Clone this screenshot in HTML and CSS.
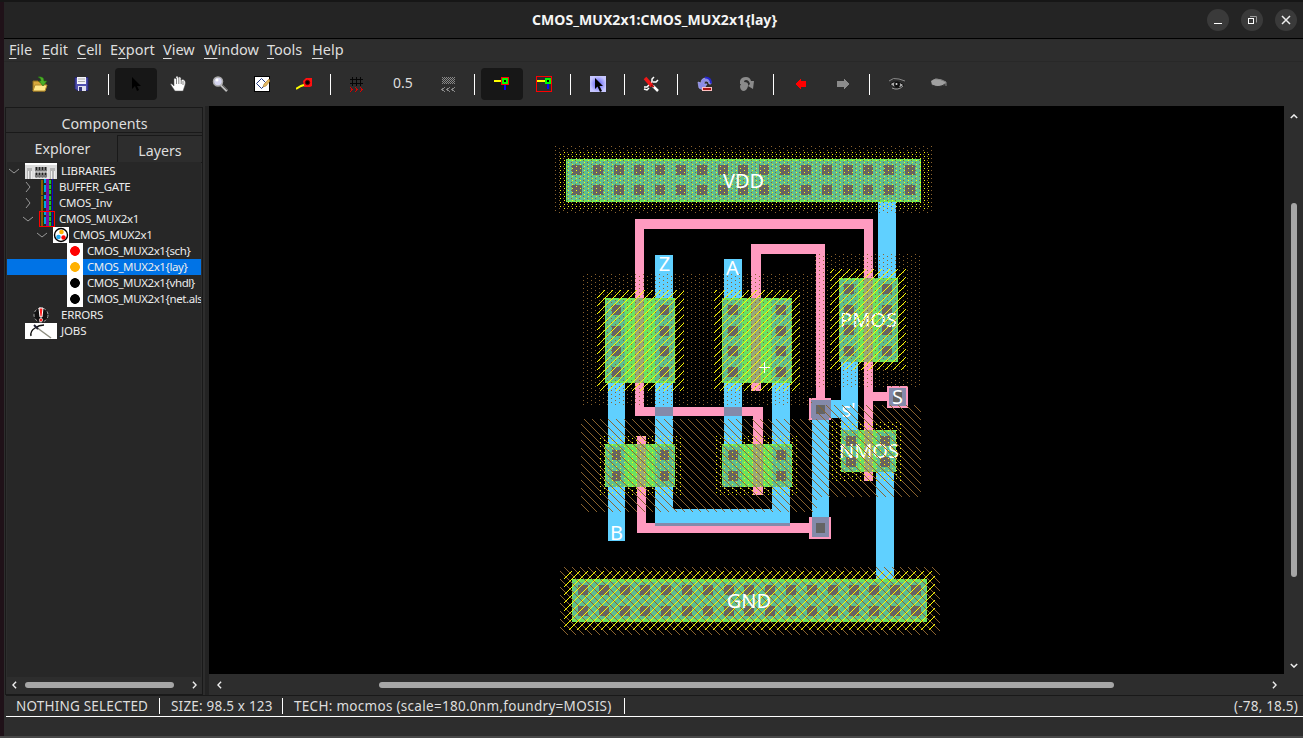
FILE: index.html
```html
<!DOCTYPE html>
<html lang="en">
<head>
<meta charset="utf-8">
<title>CMOS_MUX2x1:CMOS_MUX2x1{lay}</title>
<link rel="stylesheet" href="styles.css">
</head>
<body>
<div class="window">
  <header class="titlebar">
    <h1 class="title">CMOS_MUX2x1:CMOS_MUX2x1{lay}</h1>
    <div class="controls">
      <span class="control"><svg width="22" height="22"><path d="M7 14.5h8" stroke="#fff"/></svg></span>
      <span class="control"><svg width="22" height="22" fill="none"><path d="M9 7.500h6.500v6" stroke="#999"/><rect x="7.500" y="9.500" width="5" height="5" stroke="#fff"/></svg></span>
      <span class="control"><svg width="22" height="22"><path d="M7 7l8 8M15 7l-8 8" stroke="#eee" stroke-width="1.500"/></svg></span>
    </div>
  </header>
  <nav class="menubar">
    <span class="m-file"><u>F</u>ile</span><span class="m-edit"><u>E</u>dit</span><span class="m-cell"><u>C</u>ell</span><span class="m-export">E<u>x</u>port</span><span class="m-view"><u>V</u>iew</span><span class="m-window"><u>W</u>indow</span><span class="m-tools"><u>T</u>ools</span><span class="m-help"><u>H</u>elp</span>
  </nav>
  <div class="toolbar">
    <span class="tool"><svg width="16" height="16"><path d="M1 5h5l1 1h6v9H1z" fill="#d8a93c" stroke="#8a6a1c"/><path d="M3 9h12l-2 6H1z" fill="#ffe98c" stroke="#b58b2a"/><path d="M6 1q6-1 6 4h3l-4 5-4-5h2q0-3-3-4z" fill="#4caf28" stroke="#236b12" stroke-width=".6"/></svg></span>
    <span class="tool"><svg width="16" height="16"><path d="M1 1.500h13v13H3l-2-2z" fill="#5050b0" stroke="#25256e"/><rect x="3" y="1" width="9" height="7" fill="#f4f4fa"/><path d="M4 3h7M4 5.500h7" stroke="#aaa"/><rect x="4" y="10" width="8" height="5" fill="#dfdff0"/><rect x="5" y="11" width="3" height="4" fill="#333377"/></svg></span>
    <i class="sep"></i>
    <span class="tool active"><svg width="16" height="16"><path d="M4 1v12l3-3 2 5 2-1-2-4h4z" fill="#000"/></svg></span>
    <span class="tool"><svg width="16" height="16"><path d="M5 15L1 9Q0 7 2 8l2 2V3q1-2 2 0V1q1-2 2 0v1q1-2 3 0v2q2-1 3 0 2 1 1 5l-2 6z" fill="#fff" stroke="#555" stroke-width=".5"/><path d="M6.500 2v6M8.800 2v6M11.200 3v5M13 5v4" stroke="#333" stroke-width=".6"/></svg></span>
    <span class="tool"><svg width="16" height="16"><circle cx="6" cy="5.500" r="4.500" fill="#d5d5ef" stroke="#aaa" stroke-width="1.500"/><circle cx="5" cy="4" r="1.500" fill="#fff"/><path d="M9 9l6 6" stroke="#bbb" stroke-width="2.500"/><path d="M10 9l5 5" stroke="#444" stroke-width=".7"/></svg></span>
    <span class="tool"><svg width="16" height="16"><rect x=".5" y=".5" width="15" height="15" fill="#fff" stroke="#000"/><path d="M7.500 2.500l5 5-5 5-5-5z" fill="none" stroke="#223a80"/><path d="M9 11l1-3 5-5 1 2-4 5z" fill="#e4b95f" stroke="#a87830" stroke-width=".6"/></svg></span>
    <span class="tool"><svg width="16" height="16"><path d="M7 5l3-3h6v8l-2 1H8z" fill="#ff1010"/><circle cx="11.500" cy="6.500" r="2.200" fill="#000" stroke="#600"/><path d="M0 13l5-3 3-1" stroke="#ffff00" stroke-width="2" fill="none"/></svg></span>
    <i class="sep"></i>
    <span class="tool"><svg width="16" height="16" class="px"><path d="M1 3.500h13M1 7.500h13M3.500 1v9M7.500 1v9M11.500 1v9" stroke="#050505"/><path d="M1 11l2 2.500L1 16M6 11l2 2.500L6 16M11 11l2 2.500-2 2.500" stroke="#d00" fill="none"/></svg></span>
    <span class="tool wide">0.5</span>
    <span class="tool"><svg width="16" height="16" class="px"><path d="M2 1.500h13M2 3.500h13M2 5.500h13M2 7.500h13" stroke="#888" stroke-dasharray="1 1"/><path d="M3 2.500h12M3 4.500h12M3 6.500h12" stroke="#888" stroke-dasharray="1 1"/><path d="M5 11l-3 2.500L5 16M10 11l-3 2.500 3 2.500M15 11l-3 2.500 3 2.500" stroke="#888" fill="none"/></svg></span>
    <i class="sep"></i>
    <span class="tool active"><svg width="16" height="16" class="px"><rect y="4" width="7" height="2" fill="#ff0"/><rect x="10" y="8" width="2" height="6" fill="#00f"/><rect x="7" y="1" width="8" height="8" fill="red"/><rect x="8" y="2" width="6" height="6" fill="#0f0"/><rect x="10" y="4" width="2" height="2" fill="#000"/></svg></span>
    <span class="tool"><svg width="16" height="16" class="px"><rect x=".5" y=".5" width="15" height="15" fill="none" stroke="red"/><rect x="1" y="4" width="8" height="2" fill="#ff0"/><rect x="11" y="8" width="2" height="5" fill="#00f"/><rect x="9" y="2" width="6" height="6" fill="#0f0"/><rect x="11" y="4" width="2" height="2" fill="#000"/></svg></span>
    <i class="sep"></i>
    <span class="tool"><svg width="16" height="16"><defs><radialGradient id="halo"><stop stop-color="#5757f5"/><stop offset="1" stop-color="#c6c6ff"/></radialGradient></defs><rect width="16" height="16" fill="url(#halo)"/><path d="M5 2v11l2.500-2.500L10 16l2-1-2.500-5H13z" fill="#000"/></svg></span>
    <i class="sep"></i>
    <span class="tool"><svg width="16" height="16"><path d="M11 1L9 3v3L4 11l-3 0M15 4l-2 2h-3M1 13l3 1 2-2" stroke="#fff" stroke-width="1.500" fill="none"/><path d="M10 10l5 5" stroke="#fff" stroke-width="2.500"/><path d="M2 2l7 8" stroke="#f01818" stroke-width="3.500"/><path d="M8 9l3 2" stroke="#b00" stroke-width="1.500"/></svg></span>
    <i class="sep"></i>
    <span class="tool"><svg width="16" height="16"><path d="M1 6l3 1q0-5 5-5 5 0 5 6l-2 0q0-3-3-3-2 0-2 3l3 0-4 6-4-2z" fill="#8c8ce6" stroke="#aaaaf5" stroke-width=".7"/><path d="M8 1.500q6 0 6 6" stroke="#2525cc" stroke-width="2" fill="none"/><rect x="5.500" y="11.500" width="9" height="3" fill="#a51515" stroke="#ffc0c0"/></svg></span>
    <span class="tool"><svg width="16" height="16"><path d="M1 5q1-4 6-4 4 0 5 4l3 0-1 8-5-3 2-2q-1-4-4-4-2 0-2 2 5 0 4 4-1 5-5 5-3-1-3-5l1-2-1 0z" fill="#8b8b8b"/></svg></span>
    <i class="sep"></i>
    <span class="tool"><svg width="16" height="16" class="px"><path d="M3 8l5-6v3h5v6H8v3z" fill="#f00"/></svg></span>
    <span class="tool"><svg width="16" height="16" class="px"><path d="M14 8L9 2v3H2v6h7v3z" fill="#8b8b8b"/></svg></span>
    <i class="sep"></i>
    <span class="tool"><svg width="16" height="16"><path d="M0 5q4-4 10-2l6 2" stroke="#888" fill="none"/><path d="M1 8q6-5 14 1-7 6-14-1" fill="#aaa" stroke="#111"/><circle cx="8" cy="8.500" r="3" fill="#111"/><circle cx="7.500" cy="8" r="1" fill="#ddd"/><path d="M3 12q6 3 11-2" stroke="#999" fill="none"/></svg></span>
    <span class="tool"><svg width="16" height="16"><path d="M0 5q5-4 10-1l5 2-1 3q-8 2-13 0z" fill="#a0a0a0"/><path d="M1 9q7 4 13-1M2 10l-1 2M5 11v2M9 11v2" stroke="#333" fill="none"/><path d="M4 3q7 0 11 3l0 4" stroke="#888" fill="none"/></svg></span>
  </div>
  <main class="content">
    <aside class="side">
      <div class="tab-components">Components</div>
      <div class="tabs"><span class="tab-explorer">Explorer</span><span class="tab-layers">Layers</span></div>
      <div class="tree">
        <div class="row l0"><svg class="exp" viewBox="0 0 10 10"><path d="M0 3l5 4 5-4"/></svg><svg class="i32" viewBox="0 0 32 16"><rect width="32" height="16" fill="#ddd"/><path d="M0 0h32v2H0z" fill="#fff"/><path d="M10 4h12v11H10z" fill="#777"/><path d="M2 5h5v11H2zM25 5h5v11h-5z" fill="#b5b5b5"/><path d="M3.500 8v8M6.500 8v8M26.500 8v8M29.500 8v8" stroke="#eee"/><path d="M11.500 4v11M14.500 4v11M17.500 4v11M20.500 4v11" stroke="#222" stroke-dasharray="3 2"/><path d="M9 9h14M8 15h16" stroke="#f5f5f5"/></svg><span>LIBRARIES</span></div>
        <div class="row l1"><svg class="exp" viewBox="0 0 10 10"><path d="M3 0l4 5-4 5"/></svg><svg class="i16 px"><use href="#books"/></svg><span>BUFFER_GATE</span></div>
        <div class="row l1"><svg class="exp" viewBox="0 0 10 10"><path d="M3 0l4 5-4 5"/></svg><svg class="i16 px"><use href="#books"/></svg><span>CMOS_Inv</span></div>
        <div class="row l1"><svg class="exp" viewBox="0 0 10 10"><path d="M0 3l5 4 5-4"/></svg><svg class="i16 px"><use href="#books"/><rect x=".5" y=".5" width="15" height="15" fill="none" stroke="red"/></svg><span>CMOS_MUX2x1</span></div>
        <div class="row l2"><svg class="exp" viewBox="0 0 10 10"><path d="M0 3l5 4 5-4"/></svg><svg class="i16"><rect width="16" height="16" fill="#fff"/><circle cx="8" cy="8" r="6.500" fill="#fff" stroke="#000" stroke-width="1.400"/><circle cx="8.500" cy="5" r="2.300" fill="#ffb000"/><circle cx="5.500" cy="10" r="2.300" fill="#20aaf0"/><circle cx="10.500" cy="10.500" r="2.200" fill="red"/></svg><span>CMOS_MUX2x1</span></div>
        <div class="row l3"><i class="dot red"></i><span>CMOS_MUX2x1{sch}</span></div>
        <div class="row l3 selected"><i class="dot amber"></i><span>CMOS_MUX2x1{lay}</span></div>
        <div class="row l3"><i class="dot"></i><span>CMOS_MUX2x1{vhdl}</span></div>
        <div class="row l3"><i class="dot"></i><span>CMOS_MUX2x1{net.als}</span></div>
        <div class="row le"><svg class="i16"><circle cx="8" cy="8" r="7" fill="#111" stroke="#aaa" stroke-dasharray="3 2"/><path d="M6 1h4l-1 9H7z" fill="#ff2020" stroke="#fff"/><circle cx="8" cy="13" r="1.700" fill="#ff2020" stroke="#fff" stroke-width=".6"/></svg><span>ERRORS</span></div>
        <div class="row lj"><svg class="i32" viewBox="0 0 32 16"><rect width="32" height="16" fill="#fff"/><path d="M11 4l15 11" stroke="#8d8d80" stroke-width="1.500"/><path d="M6 13q-1-5 4-8 4-3 9-3" stroke="#111" fill="none" stroke-width="1.400"/><path d="M9 2l4 4" stroke="#223" stroke-width="2"/></svg><span>JOBS</span></div>
      </div>
      <div class="hscroll side-scroll"><svg class="arrow" viewBox="0 0 6 10"><path d="M5 1L1 5l4 4"/></svg><i class="thumb"></i><svg class="arrow" viewBox="0 0 6 10"><path d="M1 1l4 4-4 4"/></svg></div>
    </aside>
    <section class="editor">
      <svg class="canvas px" width="1075" height="568" viewBox="209 106 1075 568">
        <defs>
          <g id="books" fill="none"><path d="M3 1v15" stroke="#8a5a00" stroke-width="2"/><path d="M4.500 2v14" stroke="#074707" stroke-dasharray="2 1"/><path d="M6 0v16" stroke="#00a8e0" stroke-width="2" stroke-dasharray="4 2 7"/><path d="M8.500 0v16" stroke="#7810a5" stroke-width="3"/><path d="M11 1v15" stroke="#12c828" stroke-width="2" stroke-dasharray="4 1"/><path d="M13.500 0v16" stroke="#0909c8"/></g>
          <pattern id="nwell" width="8" height="4" patternUnits="userSpaceOnUse"><path d="M3 2h1v1H3zM7 0h1v1H7z" fill="#8b632e"/></pattern>
          <pattern id="nsel" width="8" height="4" patternUnits="userSpaceOnUse"><path d="M0 2h1v1H0zM4 0h1v1H4z" fill="#ff0"/></pattern>
          <pattern id="psel" width="8" height="8" patternUnits="userSpaceOnUse"><path d="M6 0h1v1H6zM5 1h1v1H5zM4 2h1v1H4zM3 3h1v1H3zM2 4h1v1H2zM1 5h1v1H1zM0 6h1v1H0zM7 7h1v1H7z" fill="#ff0"/></pattern>
          <pattern id="pwell" width="8" height="8" patternUnits="userSpaceOnUse"><path d="M5 0h1v1H5zM6 1h1v1H6zM7 2h1v1H7zM0 3h1v1H0zM1 4h1v1H1zM2 5h1v1H2zM3 6h1v1H3zM4 7h1v1H4z" fill="#8b632e"/></pattern>
        </defs>
        <rect x="209" y="106" width="1075" height="568"/>
        <!-- metal-1 wires -->
        <g fill="#60d0ff">
          <path d="M655 255h18v257h-18zM608 380h17v161h-17zM724 259h18v190h-18zM772 380h18v146h-18zM655 509h135v17H655zM878 202h18v80h-18zM841 360h17v72h-17zM829 400h29v18h-29zM812 418h17v101h-17zM876 470h18v112h-18z"/>
        </g>
        <!-- polysilicon -->
        <g fill="#ff9bc0">
          <path d="M635 219h238v10H635zM635 229h9v187h-9zM644 407h119v9H644zM753 416h10v79h-10zM751 244h74v10h-74zM751 254h10v137h-10zM816 254h9v145h-9zM864 229h9v252h-9zM873 392h14v9h-14zM637 436h9v97h-9zM646 523h163v10H646zM887 386h21v22h-21zM809 398h22v22h-22zM809 517h22v22h-22z"/>
        </g>
        <!-- poly over metal -->
        <path fill="#848aaa" d="M655 407h18v9h-18zM724 407h18v9h-18zM655 523h135v3H655zM889 388h17v18h-17zM811 400h20v18h-20zM812 418h17v2h-17zM812 517h17v20h-17z"/>
        <!-- diffusion -->
        <path fill="#6be260" d="M566 159h355v43H566zM572 579h355v43H572zM605 298h70v85h-70zM722 298h70v85h-70zM605 444h70v43h-70zM722 444h70v43h-70zM839 278h59v84h-59zM841 430h55v42h-55z"/>
        <!-- metal over diffusion -->
        <path fill="#5ebd90" d="M567 161h353v39H567zM573 582h353v37H573zM606 300h19v81h-19zM655 300h19v81h-19zM723 300h19v81h-19zM772 300h19v81h-19zM606 446h19v41h-19zM655 446h19v41h-19zM723 446h19v41h-19zM772 446h19v41h-19zM840 280h18v82h-18zM878 280h19v80h-19zM842 430h16v41h-16zM876 432h19v40h-19z"/>
        <!-- gates -->
        <path fill="#98a878" d="M635 298h9v85h-9zM751 298h10v85h-10zM637 444h9v43h-9zM753 444h10v43h-10zM864 278h9v84h-9zM864 430h9v42h-9z"/>
        <!-- contact cuts -->
        <g stroke="#646464" stroke-width="10" fill="none">
          <path d="M572 170h343M572 190.400h343M578 590.400h343M578 611h343" stroke-dasharray="10 10.810"/>
          <path d="M733 305v72M781 305v72M849.400 284v72M887 284v72M733 450v31M781 450v31M851.400 436v31M885 436v31" stroke-dasharray="10 10.700"/>
          <path d="M616.500 305v72M664.500 305v72M616.500 450v31M664.500 450v31" stroke-width="9" stroke-dasharray="10 10.700"/>
        </g>
        <path fill="#646464" d="M893 392h9v10h-9zM816 405h9v9h-9zM816 523h9v10h-9z"/>
        <g class="labels">
          <text x="868.500" y="327">PMOS</text><text x="869" y="458">NMOS</text><text x="848.500" y="417">s'</text>
        </g>
        <!-- wells and selects -->
        <path fill="url(#nwell)" d="M555 146h377v67H555zM583 274h232v132H583zM815 254h106v133H815z"/>
        <path fill="url(#pwell)" d="M560 567h380v68H560zM581 419h236v93H581zM817 405h104v92H817z"/>
        <path fill="url(#nsel)" d="M559 152h370v57H559zM600 436h81v59h-81zM716 436h81v59h-81zM832 422h69v59h-69z"/>
        <path fill="url(#psel)" d="M564 571h371v59H564zM597 290h87v101h-87zM714 290h86v101h-86zM830 269h76v101h-76z"/>
        <path d="M759 367.500h11M764.500 362v11" stroke="#fff"/>
        <g class="labels">
          <text x="743.500" y="188">VDD</text><text x="749" y="608">GND</text><text x="664.500" y="271">Z</text><text x="732.500" y="275">A</text><text x="616.500" y="540">B</text><text x="897.500" y="404">S</text>
        </g>
      </svg>
      <div class="vscroll"><svg class="varrow" viewBox="0 0 10 6"><path d="M1 5l4-4 4 4"/></svg><i class="vthumb"></i><svg class="varrow" viewBox="0 0 10 6"><path d="M1 1l4 4 4-4"/></svg></div>
      <div class="hscroll main-scroll"><svg class="arrow" viewBox="0 0 6 10"><path d="M5 1L1 5l4 4"/></svg><i class="thumb"></i><svg class="arrow" viewBox="0 0 6 10"><path d="M1 1l4 4-4 4"/></svg></div>
    </section>
  </main>
  <footer class="status"><span class="s1">NOTHING SELECTED</span><span class="s2">SIZE: 98.5 x 123</span><span class="s3">TECH: mocmos (scale=180.0nm,foundry=MOSIS)</span><span class="s4">(-78, 18.5)</span></footer>
</div>
</body>
</html>
```
FILE: styles.css
```css
* { box-sizing: border-box; }
body { margin: 0; background: #1f1118; font-family: "Noto Sans", "Open Sans", sans-serif; color: #dedede; overflow: hidden; }
svg { display: block; flex: none; }
.px { shape-rendering: crispEdges; }
.window { width: 1303px; height: 738px; padding-left: 4px; border-top: 2px solid #161616; border-bottom: 2px solid #484848; background: #2d2d2d; box-shadow: inset 4px 0 #1f1118; display: flex; flex-direction: column; white-space: nowrap; }
.titlebar { height: 37px; background: #242424; border-bottom: 1px solid #000; display: grid; grid-template-columns: 1fr 249px 1fr; align-items: center; padding-right: 6px; padding-left: 8px; flex: none; }
.title { margin: 0; grid-column: 2; font-size: 14px; line-height: 20px; font-weight: 700; color: #f5f5f5; text-align: center; letter-spacing: .05px; }
.controls { display: flex; gap: 12px; justify-content: flex-end; }
.control { width: 22px; height: 22px; border-radius: 50%; background: #3a3a3a; }
.menubar { height: 23px; flex: none; display: flex; padding-left: 5px; line-height: 20px; font-size: 14.500px; border-bottom: 1px solid #282828; }
.menubar u { text-underline-offset: 3px; text-decoration-thickness: 1px; }
.m-file { width: 33px; }
.m-edit { width: 35px; }
.m-cell { width: 33px; }
.m-export { width: 53px; }
.m-view { width: 41px; }
.m-window { width: 63px; }
.m-tools { width: 45px; }
.toolbar { height: 44px; flex: none; display: flex; align-items: center; padding-left: 15px; }
.tool { width: 42px; height: 32px; display: flex; align-items: center; justify-content: center; border-radius: 4px; font-size: 14px; line-height: 30px; }
.tool.wide { width: 49px; padding-bottom: 2px; }
.tool.active { background: #171717; }
.sep { width: 11.700px; height: 21px; background: linear-gradient(#fff, #fff) 5px 0 / 1px 100% no-repeat; }
.content { height: 589px; flex: none; display: flex; }
.side { width: 198px; height: 588px; margin: 1px 0 0 1px; border: 1px solid #191919; display: flex; flex-direction: column; }
.tab-components { height: 24px; line-height: 31px; font-size: 14.300px; text-align: center; flex: none; padding-left: 1px; }
.tabs { display: flex; height: 30px; border-top: 1px solid #191919; flex: none; font-size: 14.200px; text-align: center; }
.tab-explorer { width: 111px; line-height: 32px; padding-left: 2px; }
.tab-layers { flex: 1; margin-top: 2px; line-height: 29px; border: solid #191919; border-width: 1px 0 1px 1px; height: 28px; }
.tree { height: 515px; background: #272727; margin: 0 1px; overflow: hidden; font-size: 11.500px; flex: none; padding-top: 1px; color: #ececec; letter-spacing: -.15px; }
.row { height: 16px; line-height: 16px; display: flex; align-items: center; overflow: hidden; }
.l0 { padding-left: 2px; }
.l1 { padding-left: 16px; letter-spacing: -.25px; }
.l2 { padding-left: 30px; letter-spacing: -.3px; }
.l3 { padding-left: 60px; letter-spacing: -.4px; }
.le { padding-left: 26px; }
.lj { padding-left: 18px; }
.exp { width: 10px; height: 10px; fill: none; stroke: #999; }
.i32 { width: 32px; height: 16px; margin: 0 4px 0 6px; }
.i16 { width: 16px; height: 16px; margin: 0 4px 0 6px; }
.le .i16 { margin: 0 12px 0 0; }
.lj .i32 { margin-left: 0; }
.dot { width: 16px; height: 16px; margin-right: 4px; background: radial-gradient(circle, #000 4.500px, #fff 5.200px); flex: none; }
.dot.red { background: radial-gradient(circle, #f00 4.500px, #fff 5.200px); }
.dot.amber { background: radial-gradient(circle, #ffb000 4.500px, #fff 5.200px); }
.selected { background: #0073e6; }
.hscroll { display: flex; align-items: center; }
.side-scroll { flex: 1; padding: 0 5px 1px 6px; }
.arrow { width: 5px; height: 8px; fill: none; stroke: #eee; stroke-width: 1.800; }
.thumb { height: 6px; border-radius: 3px; background: #a6a6a6; }
.side-scroll .thumb { width: 149px; margin: 0 auto 0 8px; }
.editor { margin-left: 2px; border-left: 4px solid #232323; display: grid; grid-template-columns: 1075px 19px; grid-template-rows: 569px 20px; }
.canvas { background: #000; }
.vscroll { display: flex; flex-direction: column; align-items: center; padding: 8px 0 7px 1px; }
.varrow { width: 8px; height: 5px; fill: none; stroke: #eee; stroke-width: 1.800; }
.vthumb { width: 6px; height: 374px; margin: 84px 0 auto; border-radius: 3px; background: #a6a6a6; }
.main-scroll { padding: 0 7px 0 8px; }
.main-scroll .thumb { width: 735px; margin: 0 auto 0 157px; }
.labels text { font-size: 20px; fill: #fff; text-anchor: middle; }
.status { height: 22px; margin-left: 2px; flex: none; display: flex; border-top: 1px solid #191919; border-bottom: 1px solid #fff; font-size: 13.500px; align-items: center; letter-spacing: .2px; }
.status span { height: 16px; line-height: 17px; }
.s1 { width: 154px; border-right: 1px solid #fff; padding-left: 10px; }
.s2 { width: 123px; border-right: 1px solid #fff; padding-left: 11px; }
.s3 { width: 342px; border-right: 1px solid #fff; padding-left: 11px; letter-spacing: .29px; }
.s4 { margin-left: auto; padding-right: 5px; }
```
